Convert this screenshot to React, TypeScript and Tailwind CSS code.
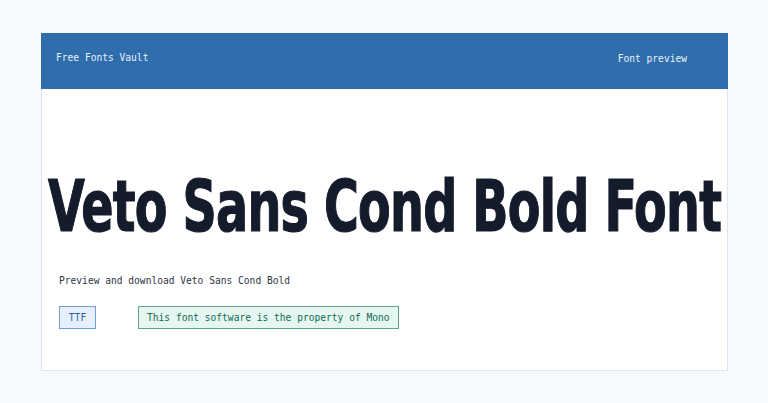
import React from "react";

const mono = { fontFamily: '"DejaVu Sans Mono", "Liberation Mono", monospace' };

export default function App() {
  return (
    <div className="min-h-[403px] w-full bg-[#f6f9fe] pt-[33px] pl-[41px]">
      <div className="w-[687px] h-[338px] border border-[#dde5f0] bg-white flex flex-col">
        {/* Top bar */}
        <header
          className="h-[56px] bg-[#2f6dad] flex items-center justify-between pl-[15px] pr-[41px] text-[9.6px] text-[#e9f1fb] -mt-px -mx-px"
          style={mono}
        >
          <span className="-mt-[6px]">Free Fonts Vault</span>
          <span className="-mt-[4px]">Font preview</span>
        </header>

        {/* Preview body */}
        <div className="flex-1 flex flex-col pl-[6px]">
          <div className="mt-[82px] h-[70px] flex items-center">
            <h1
              className="inline-block text-[71px] leading-none font-bold text-[#141b2b] whitespace-nowrap tracking-[-1px] origin-left [transform:scaleX(0.745)] [-webkit-text-stroke:1.2px_#141b2b]"
              style={{ fontFamily: '"DejaVu Sans", "Liberation Sans", sans-serif', fontStretch: "condensed" }}
            >
              Veto Sans Cond Bold Font
            </h1>
          </div>
          <p className="mt-[33px] pl-[11px] text-[9.6px] text-[#2e3645]" style={mono}>
            Preview and download Veto Sans Cond Bold
          </p>
          <div className="mt-[18px] pl-[11px] flex items-center gap-[42px] text-[9.6px]" style={mono}>
            <span className="h-[23px] w-[37px] flex items-center justify-center border border-[#6f9fd8] bg-[#e5effd] text-[#2c5fa3]">
              TTF
            </span>
            <span className="h-[23px] px-[8px] flex items-center border border-[#5fa596] bg-[#e6f6f1] text-[#0f6b55]">
              This font software is the property of Mono
            </span>
          </div>
        </div>
      </div>
    </div>
  );
}
